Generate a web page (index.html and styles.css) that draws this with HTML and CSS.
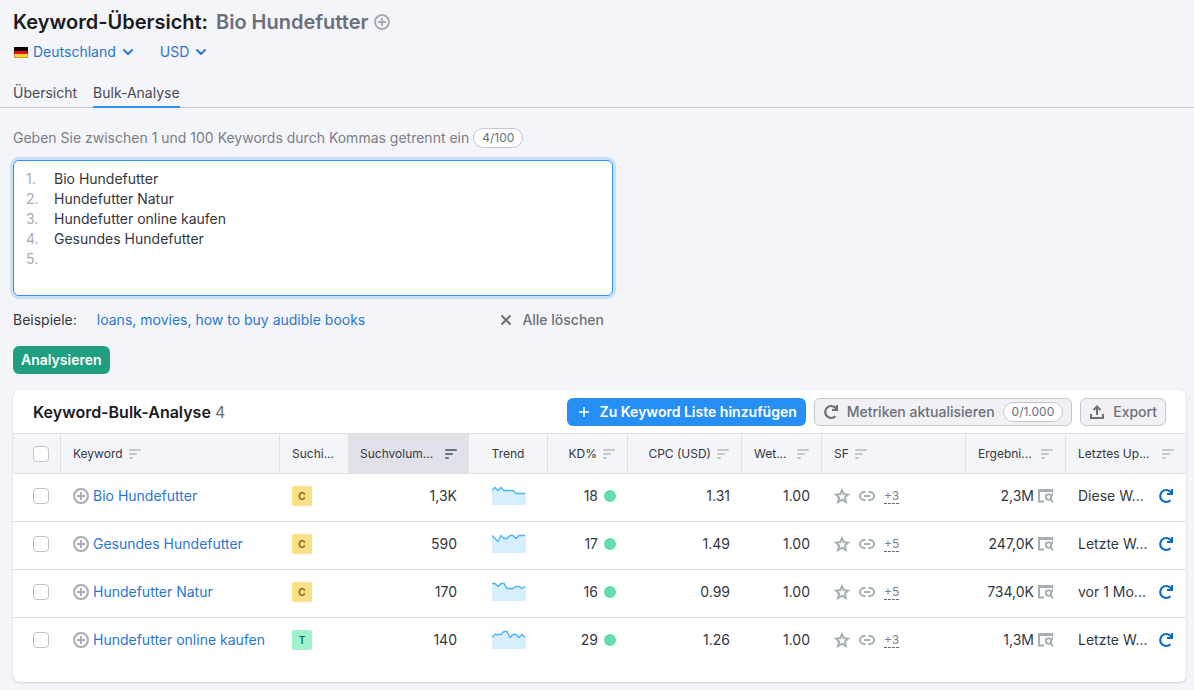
FILE: index.html
```html
<!DOCTYPE html>
<html lang="de">
<head>
<meta charset="utf-8">
<meta name="viewport" content="width=device-width, initial-scale=1">
<title>Keyword-Übersicht</title>
<link rel="stylesheet" href="styles.css">
</head>
<body>
<svg class="sprite" aria-hidden="true">
  <symbol id="i-plus-circle" viewBox="0 0 16 16"><circle cx="8" cy="8" r="7" fill="none" stroke="currentColor" stroke-width="2"/><path d="M8 4v8M4 8h8" stroke="currentColor" stroke-width="2"/></symbol>
  <symbol id="i-chevron" viewBox="0 0 12 12"><path d="M2 4l4 4 4-4" fill="none" stroke="currentColor" stroke-width="2" stroke-linecap="round" stroke-linejoin="round"/></symbol>
  <symbol id="i-sort" viewBox="0 0 12 10"><path d="M1 1h10M1 5h6M1 9h2" fill="none" stroke="currentColor" stroke-width="2" stroke-linecap="round"/></symbol>
  <symbol id="i-refresh" viewBox="0 0 16 16"><path d="M12.500 12.200A6 6 0 1 1 12.500 3.800L14 6" fill="none" stroke="currentColor" stroke-width="2.200"/><path d="M15 1v6H9V5h4V1z" fill="currentColor"/></symbol>
  <symbol id="i-star" viewBox="0 0 16 16"><path d="M8 2.200l1.800 4 4.400.400-3.300 2.900 1 4.400L8 11.600l-3.900 2.300 1-4.400-3.300-2.900 4.400-.400z" fill="none" stroke="currentColor" stroke-width="2"/></symbol>
  <symbol id="i-link" viewBox="0 0 16 16"><path d="M6.500 4H5a4 4 0 0 0 0 8h1.500M9.500 4H11a4 4 0 0 1 0 8H9.500M5 8h6" fill="none" stroke="currentColor" stroke-width="2"/></symbol>
  <symbol id="i-serp" viewBox="0 0 16 14"><path d="M1 1v11.500h5" fill="none" stroke="currentColor" stroke-width="2"/><path d="M0 0h15v7h-1V3H0z" fill="currentColor"/><circle cx="10.500" cy="8" r="2.700" fill="none" stroke="currentColor" stroke-width="2"/><path d="M12.300 10l2.700 3" stroke="currentColor" stroke-width="2"/></symbol>
</svg>

<header class="top">
  <h1 class="title">Keyword-Übersicht: <span class="title-term">Bio Hundefutter</span>
    <button class="icon-btn" type="button" aria-label="Hinzufügen"><svg class="i16"><use href="#i-plus-circle"/></svg></button></h1>
  <div class="filters">
    <button class="filter" type="button"><svg class="flag" viewBox="0 0 14 11"><path fill="#000" d="M0 0h14v4H0z"/><path fill="#e8110f" d="M0 4h14v4H0z"/><path fill="#fc3" d="M0 7h14v4H0z"/><path fill="none" stroke="#000" stroke-opacity=".2" d="M.5.5h13v10H.5z"/></svg><span>Deutschland</span><svg class="i12"><use href="#i-chevron"/></svg></button>
    <button class="filter" type="button"><span>USD</span><svg class="i12"><use href="#i-chevron"/></svg></button>
  </div>
  <nav class="tabs">
    <a class="tab" href="#uebersicht">Übersicht</a>
    <a class="tab tab-active" href="#bulk" aria-current="page">Bulk-Analyse</a>
  </nav>
</header>

<main class="main">
  <form class="entry">
    <div class="hint"><label for="kw">Geben Sie zwischen 1 und 100 Keywords durch Kommas getrennt ein</label><span class="pill">4/100</span></div>
    <div class="editor">
      <div class="lines" aria-hidden="true"><span>1.</span><span>2.</span><span>3.</span><span>4.</span><span>5.</span></div>
      <textarea class="text" id="kw" rows="6" spellcheck="false">Bio Hundefutter
Hundefutter Natur
Hundefutter online kaufen
Gesundes Hundefutter
</textarea>
    </div>
    <div class="below">
      <span>Beispiele:</span>
      <a class="link" href="#beispiele">loans, movies, how to buy audible books</a>
      <button class="clear" type="button"><svg class="i12" viewBox="0 0 12 12"><path d="M1.500 1.500l9 9M10.500 1.500l-9 9" stroke="currentColor" stroke-width="2"/></svg>Alle löschen</button>
    </div>
    <button class="btn btn-green" type="button">Analysieren</button>
  </form>

  <section class="card">
    <div class="card-head">
      <h2 class="card-title">Keyword-Bulk-Analyse <span class="count">4</span></h2>
      <button class="btn btn-blue" type="button"><svg class="i12" viewBox="0 0 12 12"><path d="M6 1v10M1 6h10" stroke="currentColor" stroke-width="1.500"/></svg>Zu Keyword Liste hinzufügen</button>
      <button class="btn btn-grey" type="button"><svg class="i16"><use href="#i-refresh"/></svg>Metriken aktualisieren<span class="pill">0/1.000</span></button>
      <button class="btn btn-grey" type="button"><svg class="i16" viewBox="0 0 16 16"><path d="M2 10v4h12v-4M8 11V3M4.500 6L8 2.500 11.500 6" fill="none" stroke="currentColor" stroke-width="2"/></svg>Export</button>
    </div>
    <table class="grid">
      <colgroup><col class="c-check"><col><col class="c-intent"><col class="c-vol"><col class="c-trend"><col class="c-kd"><col class="c-cpc"><col class="c-comp"><col class="c-sf"><col class="c-res"><col class="c-upd"></colgroup>
      <thead>
        <tr>
          <th class="sep check"><input class="box" type="checkbox" aria-label="Alle auswählen"></th>
          <th class="sep"><div class="cell">Keyword<svg class="sort"><use href="#i-sort"/></svg></div></th>
          <th>Suchi...</th>
          <th class="sorted"><div class="cell spread">Suchvolum...<svg class="sort"><use href="#i-sort"/></svg></div></th>
          <th class="sep mid">Trend</th>
          <th class="sep"><div class="cell end">KD%<svg class="sort"><use href="#i-sort"/></svg></div></th>
          <th class="sep"><div class="cell end">CPC (USD)<svg class="sort"><use href="#i-sort"/></svg></div></th>
          <th class="sep"><div class="cell spread">Wet...<svg class="sort"><use href="#i-sort"/></svg></div></th>
          <th class="sep"><div class="cell">SF<svg class="sort"><use href="#i-sort"/></svg></div></th>
          <th class="sep"><div class="cell spread">Ergebni...<svg class="sort"><use href="#i-sort"/></svg></div></th>
          <th><div class="cell spread">Letztes Up...<svg class="sort"><use href="#i-sort"/></svg></div></th>
        </tr>
      </thead>
      <tbody>
        <tr>
          <td class="check"><input class="box" type="checkbox" aria-label="Bio Hundefutter auswählen"></td>
          <td><div class="cell kw"><svg class="i16 mute"><use href="#i-plus-circle"/></svg><a class="link" href="#k1">Bio Hundefutter</a></div></td>
          <td><span class="tag tag-c">C</span></td>
          <td class="num">1,3K</td>
          <td><svg class="spark" viewBox="0 0 34 20"><path class="area" d="M0 4.500L3 1.500l3 3L9 1.500l3 3h9L24 7.500h10V19H0z"/><path class="line" d="M0 4.500L3 1.500l3 3L9 1.500l3 3h9L24 7.500h9"/></svg></td>
          <td><div class="cell end">18<i class="dot"></i></div></td>
          <td class="num">1.31</td>
          <td class="num">1.00</td>
          <td><div class="cell sf"><svg class="i16"><use href="#i-star"/></svg><svg class="i16"><use href="#i-link"/></svg><button class="more" type="button">+3</button></div></td>
          <td><div class="cell end res">2,3M<svg class="serp"><use href="#i-serp"/></svg></div></td>
          <td><div class="cell spread">Diese W...<button class="icon-btn blue" type="button" aria-label="Aktualisieren"><svg class="i16"><use href="#i-refresh"/></svg></button></div></td>
        </tr>
        <tr>
          <td class="check"><input class="box" type="checkbox" aria-label="Gesundes Hundefutter auswählen"></td>
          <td><div class="cell kw"><svg class="i16 mute"><use href="#i-plus-circle"/></svg><a class="link" href="#k2">Gesundes Hundefutter</a></div></td>
          <td><span class="tag tag-c">C</span></td>
          <td class="num">590</td>
          <td><svg class="spark" viewBox="0 0 34 20"><path class="area" d="M0 1.500l3 3 3 3 3-6 3 3h3l3-3h3l3 3 3-3h7V19H0z"/><path class="line" d="M0 1.500l3 3 3 3 3-6 3 3h3l3-3h3l3 3 3-3h6"/></svg></td>
          <td><div class="cell end">17<i class="dot"></i></div></td>
          <td class="num">1.49</td>
          <td class="num">1.00</td>
          <td><div class="cell sf"><svg class="i16"><use href="#i-star"/></svg><svg class="i16"><use href="#i-link"/></svg><button class="more" type="button">+5</button></div></td>
          <td><div class="cell end res">247,0K<svg class="serp"><use href="#i-serp"/></svg></div></td>
          <td><div class="cell spread">Letzte W...<button class="icon-btn blue" type="button" aria-label="Aktualisieren"><svg class="i16"><use href="#i-refresh"/></svg></button></div></td>
        </tr>
        <tr>
          <td class="check"><input class="box" type="checkbox" aria-label="Hundefutter Natur auswählen"></td>
          <td><div class="cell kw"><svg class="i16 mute"><use href="#i-plus-circle"/></svg><a class="link" href="#k3">Hundefutter Natur</a></div></td>
          <td><span class="tag tag-c">C</span></td>
          <td class="num">170</td>
          <td><svg class="spark" viewBox="0 0 34 20"><path class="area" d="M0 1.500h3l3 3 3-3h3l3 5h6l3-2h3l3 2 4-2V19H0z"/><path class="line" d="M0 1.500h3l3 3 3-3h3l3 5h6l3-2h3l3 2 3-2"/></svg></td>
          <td><div class="cell end">16<i class="dot"></i></div></td>
          <td class="num">0.99</td>
          <td class="num">1.00</td>
          <td><div class="cell sf"><svg class="i16"><use href="#i-star"/></svg><svg class="i16"><use href="#i-link"/></svg><button class="more" type="button">+5</button></div></td>
          <td><div class="cell end res">734,0K<svg class="serp"><use href="#i-serp"/></svg></div></td>
          <td><div class="cell spread">vor 1 Mo...<button class="icon-btn blue" type="button" aria-label="Aktualisieren"><svg class="i16"><use href="#i-refresh"/></svg></button></div></td>
        </tr>
        <tr>
          <td class="check"><input class="box" type="checkbox" aria-label="Hundefutter online kaufen auswählen"></td>
          <td><div class="cell kw"><svg class="i16 mute"><use href="#i-plus-circle"/></svg><a class="link" href="#k4">Hundefutter online kaufen</a></div></td>
          <td><span class="tag tag-t">T</span></td>
          <td class="num">140</td>
          <td><svg class="spark" viewBox="0 0 34 20"><path class="area" d="M0 7.500l3-3h6l3-3h3l3 6 3-3h3l3 3 3-3 4 3V19H0z"/><path class="line" d="M0 7.500l3-3h6l3-3h3l3 6 3-3h3l3 3 3-3 3 3"/></svg></td>
          <td><div class="cell end">29<i class="dot"></i></div></td>
          <td class="num">1.26</td>
          <td class="num">1.00</td>
          <td><div class="cell sf"><svg class="i16"><use href="#i-star"/></svg><svg class="i16"><use href="#i-link"/></svg><button class="more" type="button">+3</button></div></td>
          <td><div class="cell end res">1,3M<svg class="serp"><use href="#i-serp"/></svg></div></td>
          <td><div class="cell spread">Letzte W...<button class="icon-btn blue" type="button" aria-label="Aktualisieren"><svg class="i16"><use href="#i-refresh"/></svg></button></div></td>
        </tr>
      </tbody>
    </table>
  </section>
</main>
</body>
</html>
```
FILE: styles.css
```css
* { box-sizing: border-box; }
body {
  margin: 0;
  background: #f4f5f9;
  color: #333640;
  font: 14px/20px Inter, sans-serif;
}
button, textarea { font: inherit; color: inherit; margin: 0; }
button { background: none; border: 0; padding: 0; cursor: pointer; white-space: nowrap; }
svg { display: block; flex: none; }
.sprite { display: none; }
.i16 { width: 16px; height: 16px; }
.i12 { width: 12px; height: 12px; }
.icon-btn { color: #a9abb6; }
.blue { color: #0f6cbf; }
.mute { color: #a9abb6; }
.link { color: #2a77cf; text-decoration: none; }

/* Page header */
.top { border-bottom: 1px solid #c4c7cf; padding: 10px 13px 0; }
.title {
  display: flex;
  align-items: center;
  gap: 6px;
  margin: 0;
  font-size: 20px;
  line-height: 24px;
  font-weight: 600;
  color: #191b23;
}
.title-term { color: #6c6e79; margin-left: 2px; }
.filters { display: flex; gap: 26px; margin-top: 8px; }
.filter { display: flex; align-items: center; gap: 6px; color: #2a77cf; }
.flag { width: 14px; height: 11px; margin-left: 1px; }
.flag + span { margin-left: -1px; }
.tabs { display: flex; gap: 16px; margin-top: 21px; }
.tab { color: #484a54; text-decoration: none; height: 25px; margin-bottom: -1px; border-bottom: 2px solid transparent; }
.tab-active { border-color: #2b94f5; }

/* Keyword entry */
.main { padding: 20px 8px 8px 13px; }
.entry { max-width: 600px; }
.hint { display: flex; align-items: center; gap: 4px; color: #7b7d88; white-space: nowrap; }
.pill {
  height: 20px;
  padding: 0 8px;
  border: 1px solid #c4c7cf;
  border-radius: 10px;
  background: #fff;
  color: #6c6e79;
  font-size: 12px;
  line-height: 18px;
  font-weight: 400;
}
.editor {
  display: flex;
  margin-top: 12px;
  padding: 8px 12px 6px;
  border: 1px solid #2b94f5;
  border-radius: 6px;
  background: #fff;
  box-shadow: 0 0 0 3px #c9e0f8;
}
.lines { display: flex; flex-direction: column; width: 28px; color: #a9abb6; }
.text {
  flex: 1;
  height: 120px;
  padding: 0;
  border: 0;
  outline: 0;
  resize: none;
  background: none;
}
.below { display: flex; align-items: center; gap: 20px; margin-top: 14px; padding-right: 9px; }
.clear { display: flex; align-items: center; gap: 10px; margin-left: auto; color: #6c6e79; font-weight: 500; }

.btn {
  display: flex;
  align-items: center;
  gap: 8px;
  height: 28px;
  padding: 0 8px;
  border: 1px solid transparent;
  border-radius: 6px;
  font-weight: 500;
}
.btn-green { margin-top: 16px; padding: 0 7px; background: #209f80; color: #fff; font-weight: 600; }
.btn-blue { gap: 10px; background: #268ff5; color: #fff; font-weight: 600; }
.btn-blue .i12 { margin-left: 2px; }
.btn-grey { background: #f1f1f5; border-color: #c4c7cf; color: #6c6e79; }

/* Results */
.card {
  margin-top: 16px;
  padding-bottom: 16px;
  border-radius: 6px;
  background: #fff;
  box-shadow: 0 0 1px rgba(25, 27, 35, .2), 0 1px 2px rgba(25, 27, 35, .14);
  overflow: hidden;
}
.card-head { display: flex; align-items: center; gap: 8px; padding: 8px 20px 7px; }
.card-title { flex: 1; margin: 0; font-size: 16px; line-height: 20px; font-weight: 600; color: #191b23; }
.count { color: #6c6e79; font-weight: 400; }
.grid { width: 100%; table-layout: fixed; border-collapse: separate; border-spacing: 0; }
.c-check { width: 48px; }
.c-intent { width: 68px; }
.c-vol { width: 121px; }
.c-trend { width: 79px; }
.c-kd { width: 80px; }
.c-cpc { width: 114px; }
.c-comp { width: 80px; }
.c-sf { width: 144px; }
.c-res { width: 100px; }
.c-upd { width: 120px; }
th {
  height: 41px;
  padding: 0 12px;
  background: #f4f5f9;
  border-top: 1px solid #dfe0e8;
  border-bottom: 1px solid #dfe0e8;
  font-size: 12px;
  line-height: 16px;
  font-weight: 400;
  text-align: left;
  white-space: nowrap;
}
td { height: 48px; padding: 0 12px 4px; border-bottom: 1px solid #dfe0e8; white-space: nowrap; }
tbody tr:last-child td { border-bottom-color: transparent; }
.sep { border-right: 1px solid #dfe0e8; }
.sorted { background: #e0e1e9; }
.mid { text-align: center; }
.num { text-align: right; }
.cell { display: flex; align-items: center; gap: 6px; }
.end { justify-content: flex-end; }
.spread { justify-content: space-between; }
.kw { gap: 4px; }
.res { gap: 4px; }
.sort { width: 12px; height: 10px; color: #c3c8cb; }
.sorted .sort { color: #65757a; }
.check { padding-left: 20px; padding-right: 0; }
.box {
  display: block;
  appearance: none;
  width: 16px;
  height: 16px;
  margin: 0;
  border: 1px solid #c0c2cc;
  border-radius: 4px;
  background: #fff;
}
.tag {
  display: block;
  width: 20px;
  height: 20px;
  border-radius: 2px;
  font-size: 10px;
  font-weight: 600;
  text-align: center;
}
.tag-c { background: #fbdf83; color: #95501b; }
.tag-t { background: #a0f2cb; color: #0c7355; }
.spark { width: 34px; height: 20px; }
.area { fill: #d7eefd; }
.line { fill: none; stroke: #4ab3f7; stroke-width: 1.3; }
td .spark { margin-left: 11px; }
.dot { width: 12px; height: 12px; border-radius: 50%; background: #62dcab; }
.sf { gap: 9px; color: #a4b0b3; }
.more { border-bottom: 1px dashed #6c6e79; color: #7b7d88; font-size: 12px; line-height: 15px; }
.serp { width: 16px; height: 14px; color: #a4b0b3; }
```
